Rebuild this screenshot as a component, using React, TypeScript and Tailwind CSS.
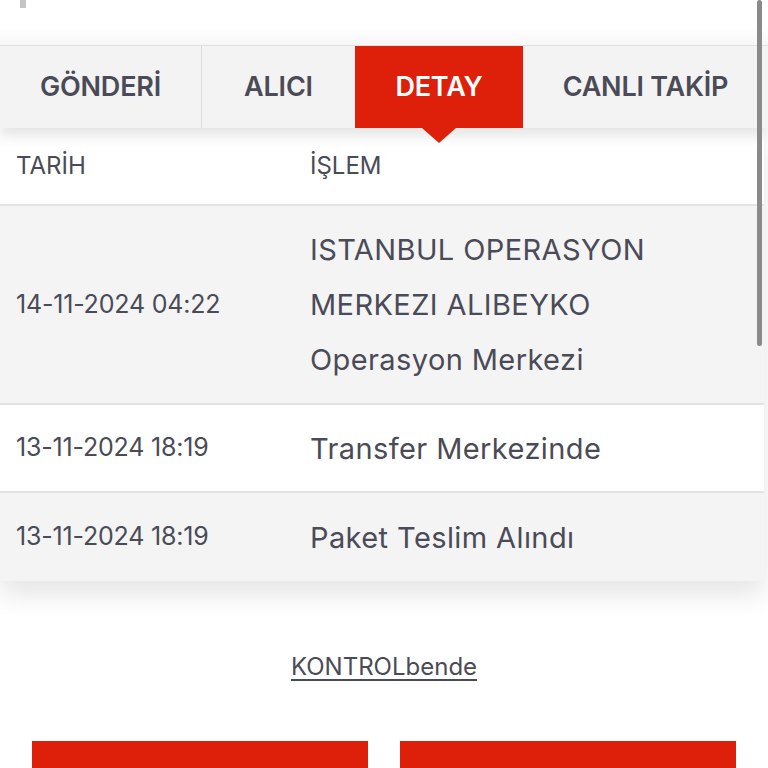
import React from "react";

const tabs = [
  { label: "GÖNDERİ", w: "w-[202px]", active: false, divider: true },
  { label: "ALICI", w: "w-[153px]", active: false, divider: false },
  { label: "DETAY", w: "w-[168px]", active: true, divider: false },
  { label: "CANLI TAKİP", w: "flex-1", active: false, divider: false },
];

const rows = [
  {
    date: "14-11-2024 04:22",
    lines: ["ISTANBUL OPERASYON", "MERKEZI ALIBEYKO", "Operasyon Merkezi"],
    shaded: true,
  },
  { date: "13-11-2024 18:19", lines: ["Transfer Merkezinde"], shaded: false },
  { date: "13-11-2024 18:19", lines: ["Paket Teslim Alındı"], shaded: true },
];

export default function App() {
  return (
    <div className="relative w-[768px] h-[768px] overflow-hidden bg-white font-['Inter',sans-serif] text-[#4a4b57]">
      {/* top input area */}
      <div className="h-[46px] bg-gradient-to-b from-white from-60% to-[#f7f7f7] border-b border-[#e2e2e4] pl-[20px]">
        <div className="w-[6px] h-[8px] bg-[#c4c4c4]" />
      </div>

      {/* tabs */}
      <div className="relative z-10 flex h-[82px] bg-[#f3f3f4] shadow-[0_8px_12px_rgba(0,0,0,0.10)]">
        {tabs.map((t) => (
          <div
            key={t.label}
            className={`relative flex items-center justify-center ${t.w} ${
              t.active ? "bg-[#de1f09] text-white" : "text-[#4a4b57]"
            } ${t.divider ? "border-r border-[#dcdcde]" : ""}`}
          >
            <span className="text-[27px] font-semibold tracking-[-0.2px]">
              {t.label}
            </span>
            {t.active && (
              <div className="absolute left-1/2 -translate-x-1/2 top-full w-0 h-0 border-l-[17px] border-r-[17px] border-t-[15px] border-l-transparent border-r-transparent border-t-[#de1f09]" />
            )}
          </div>
        ))}
      </div>

      {/* table */}
      <div className="shadow-[0_14px_24px_rgba(0,0,0,0.10)] mr-[4px]">
        <div className="flex items-center h-[78px] bg-white border-b-2 border-[#e4e4e6] text-[24px]">
          <div className="w-[310px] pl-[16px]">TARİH</div>
          <div>İŞLEM</div>
        </div>
        {rows.map((r, i) => (
          <div
            key={i}
            className={`flex items-center ${
              r.lines.length > 1 ? "py-[16px]" : "h-[88px]"
            } ${r.shaded ? "bg-[#f4f4f5]" : "bg-white"} ${
              i < rows.length - 1 ? "border-b-2 border-[#e4e4e6]" : ""
            }`}
          >
            <div className="w-[310px] pl-[16px] text-[25px] tracking-[-0.2px]">
              {r.date}
            </div>
            <div className="text-[29px] leading-[55px] tracking-[0.4px]">
              {r.lines.map((l) => (
                <div key={l}>{l}</div>
              ))}
            </div>
          </div>
        ))}
      </div>

      {/* link */}
      <div className="flex justify-center pt-[68px]">
        <a className="text-[24px] underline underline-offset-[4px] text-[#4a4b57]">
          KONTROLbende
        </a>
      </div>

      {/* buttons */}
      <div className="flex gap-[32px] px-[32px] pt-[56px]">
        <div className="flex-1 h-[60px] bg-[#de1f09]" />
        <div className="flex-1 h-[60px] bg-[#de1f09]" />
      </div>

      {/* scrollbar */}
      <div className="absolute right-[6px] top-0 w-[5px] h-[346px] rounded-full bg-[#8a8a8a] z-20" />
    </div>
  );
}
